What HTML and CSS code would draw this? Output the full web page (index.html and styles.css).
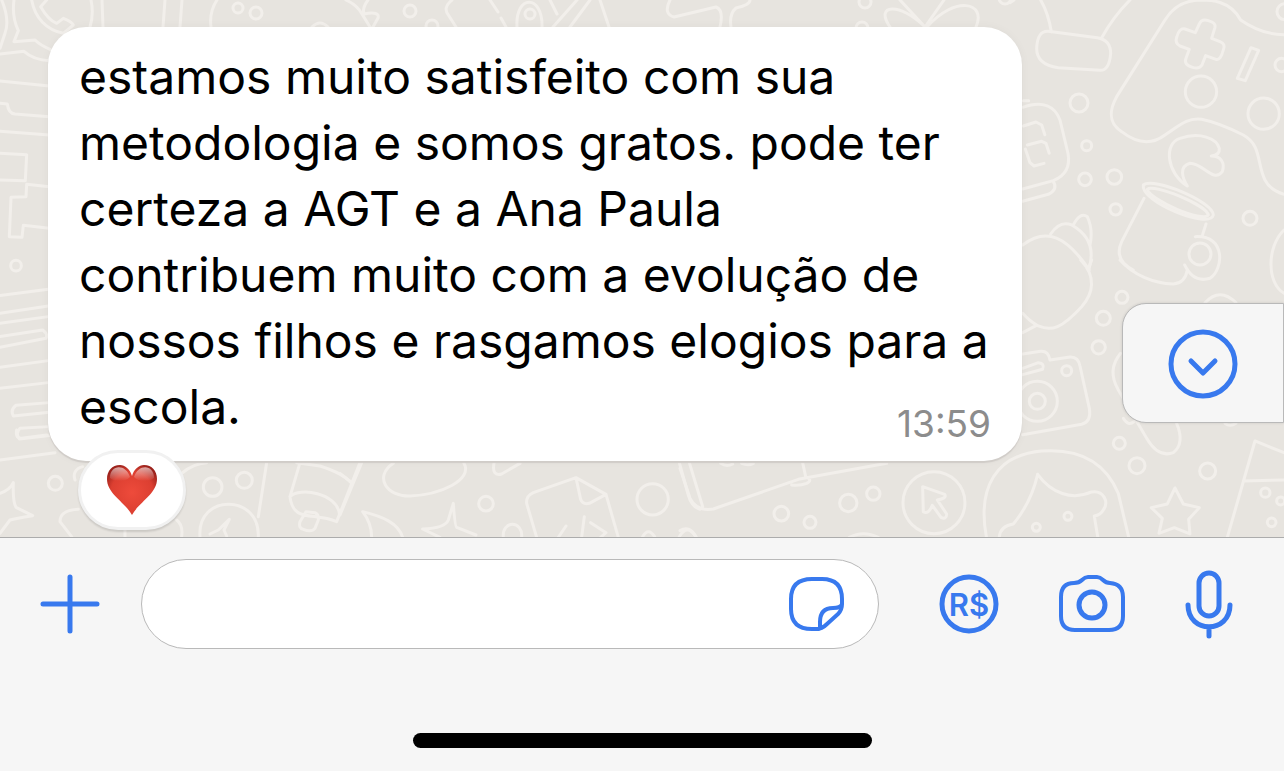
FILE: index.html
```html
<!DOCTYPE html>
<html lang="pt-BR">

<head>
  <meta charset="UTF-8" />
  <meta name="viewport" content="width=device-width, initial-scale=1" />
  <title>Conversa</title>

  <link rel="stylesheet" href="styles.css">
</head>

<body>
  <main class="chat">
    <svg class="wallpaper" viewBox="0 0 1284 537" preserveAspectRatio="xMinYMin slice" aria-hidden="true">
      <!-- right side, top: lamp, gamepad, clock, mug -->
      <g transform="translate(1010 0) scale(.3333)">
        <path d="M92 0Q115 40 124 95M360 0Q310 50 276 112M0 8L12 0" />
        <path d="M115 94L262 113Q302 120 302 160Q298 212 270 211L145 203Q80 195 80 145Q82 92 115 94Z" />
        <path d="M822 104Q755 104 692 60C660 0 600 0 570 0Q500 2 465 60L320 290C290 345 305 375 335 395C380 430 425 435 465 405C510 375 535 352 575 358Q625 368 700 405C755 435 740 490 765 540Q780 570 822 583" />
        <path d="M568 72Q575 55 595 62Q618 68 615 82L605 115L630 125Q648 132 640 150Q632 182 618 178L587 167L576 195Q568 208 548 202Q520 194 528 175L538 148L510 138Q494 130 500 112Q508 82 525 87L556 98Z" />
        <path d="M723 143L746 151L706 242L682 235Z" />
        <circle cx="573" cy="275" r="47" /><circle cx="761" cy="341" r="47" />
        <circle cx="825" cy="35" r="24" /><circle cx="815" cy="195" r="20" />
        <circle cx="207" cy="309" r="27" /><circle cx="230" cy="437" r="15" />
        <circle cx="225" cy="538" r="19" /><circle cx="313" cy="531" r="22" />
        <circle cx="317" cy="628" r="17" /><circle cx="720" cy="655" r="21" />
        <path d="M38 322C100 300 135 320 150 360L174 460Q185 520 130 542L38 567M38 604L115 583Q145 568 130 545M40 302L56 302" />
        <path stroke-dasharray="30 10" d="M40 378L78 366L95 375L107 412M52 435L95 424L108 430L121 470M46 447L60 488L72 498L118 486" />
        <path d="M532 558C470 520 460 430 510 415C570 395 620 415 628 445Q630 465 604 468C635 468 645 490 637 515C610 550 580 490 540 490C505 500 518 535 532 558Z" />
        <path d="M400 555C430 530 610 605 610 645C600 690 390 605 400 555Z" />
        <path d="M412 568C430 550 590 615 595 645C580 670 420 600 412 568Z" />
        <path d="M402 595L335 725Q310 780 370 810M588 672L576 710M556 710C650 705 640 810 600 835Q550 850 524 795" />
        <circle cx="570" cy="762" r="33" />
        <path d="M38 735C110 680 170 710 238 810M122 702Q150 660 185 675Q265 720 236 810M190 675Q210 635 232 650Q250 690 240 735M822 690C770 740 770 850 822 880" />
      </g>
      <!-- right side, bottom: fruit, camera, girl, star -->
      <g transform="translate(1010 260) scale(.3333)">
        <path d="M212 0C260 50 250 100 215 140C155 205 125 215 85 198Q60 185 38 160M38 218L78 197M245 0L235 28M330 0C370 45 430 70 490 72Q525 70 532 30M585 128Q630 80 678 128" />
        <path d="M38 282L92 274Q115 272 120 300L180 291Q205 290 210 318L238 445Q245 485 215 493L38 524M38 325L85 308Q105 310 98 328L38 344" />
        <circle cx="82" cy="424" r="60" /><circle cx="82" cy="424" r="24" />
        <circle cx="170" cy="332" r="15" /><circle cx="336" cy="112" r="18" />
        <circle cx="280" cy="175" r="21" /><circle cx="266" cy="262" r="20" />
        <circle cx="328" cy="550" r="18" /><circle cx="381" cy="617" r="24" />
        <circle cx="593" cy="633" r="24" />
        <path d="M332 280Q290 330 325 390L410 535Q445 595 490 578Q525 550 500 490M340 475Q355 500 372 485M645 490Q660 502 678 490" />
        <path d="M495 684L520 732L568 743L536 778L540 822L493 803L447 820L457 775L424 743L472 732Z" />
        <path d="M652 832L735 543L822 578M700 663L822 660" />
        <circle cx="766" cy="698" r="14" /><circle cx="812" cy="723" r="12" /><circle cx="785" cy="787" r="13" />
      </g>
      <g transform="translate(680 440) scale(.3333)">
        <path d="M920 295C890 140 950 45 1085 33C1235 22 1290 100 1315 160L1347 295M1073 103C1115 160 1175 182 1235 156C1270 150 1288 185 1270 210Q1262 225 1243 228L1254 295M1073 103C1060 160 1035 210 1000 252Q960 258 958 292" />
        <circle cx="1164" cy="229" r="12" /><circle cx="1069" cy="262" r="12" />
        <circle cx="762" cy="188" r="93" />
        <path d="M728 140L794 163Q802 175 772 180L800 222Q800 240 783 232L757 196Q745 225 730 215Z" />
        <circle cx="505" cy="189" r="26" /><circle cx="580" cy="161" r="20" />
        <circle cx="304" cy="221" r="22" /><circle cx="390" cy="247" r="18" />
        <path d="M0 85L30 175Q50 215 100 207L355 118L620 70M28 68L68 200M368 68L377 110Q400 120 380 130Q360 138 335 135M0 272Q30 255 48 292M508 292Q550 270 595 292M122 70Q140 82 158 72M185 70Q205 78 220 70" />
      </g>
      <!-- bottom middle: paper sheet, sparkle -->
      <g transform="translate(340 440) scale(.3333)">
        <path d="M590 292L560 190Q558 168 580 158L708 113L798 163L835 292M708 113L722 178Q728 195 748 190L798 163M655 292L678 258M725 292L733 230M752 248L798 278L782 292" />
        <circle cx="938" cy="178" r="47" /><circle cx="438" cy="191" r="22" />
        <path d="M1018 68L1045 165Q1055 200 1080 208M490 292C485 240 550 240 545 292M908 290Q925 260 944 290M1018 290Q1042 250 1068 290" />
        <path d="M160 70C100 110 140 170 210 168C300 165 400 120 372 70M462 70Q455 110 485 102L540 70M0 225L65 68M0 100L35 128M95 292Q95 250 68 215C130 230 175 250 188 292" />
        <path d="M300 292L248 267Q315 265 325 240L340 190Q345 260 350 262L408 285" />
      </g>
      <!-- bottom left: sparkle, clock, bulb -->
      <g transform="translate(0 430) scale(.3333)">
        <path d="M0 190Q30 180 40 158Q38 215 48 232L98 257Q45 265 30 270L0 310M50 0Q45 25 65 25L140 15M0 90L165 68M215 320L180 275Q180 240 235 238M545 320Q550 285 530 270M375 300V320M545 130Q580 100 620 98M800 98L775 260" />
        <circle cx="166" cy="160" r="21" /><circle cx="638" cy="171" r="28" /><circle cx="733" cy="151" r="24" />
        <path d="M248 110Q215 120 225 150M600 320C590 190 780 190 775 320M630 312L655 300L688 268L672 300L680 318" />
        <path d="M900 98L870 200C880 280 940 245 1010 275L1080 98M870 200C900 170 1010 190 1018 250M890 98L960 108Q1030 130 1055 160M918 245L945 248Q958 255 955 270L945 295Q935 308 910 298Q895 295 900 275Z" />
      </g>
      <!-- left edge: phone bubble, bus, shelves -->
      <g transform="scale(.3333)">
        <path d="M5 0Q30 60 15 100L0 145M42 0Q35 50 55 92L42 125L105 120Q120 135 150 148M0 162L72 154Q100 180 150 182M95 0C105 55 140 90 190 100L220 75Q215 65 190 55L170 70Q145 60 122 20L140 0" />
        <path d="M0 243L148 258M0 310L22 312Q25 340 45 342L148 350M0 394L148 405M0 460L80 464L76 542L0 540M80 553L148 560M80 553L78 590L33 592L28 710L66 712L70 676L148 685" />
        <circle cx="48" cy="797" r="16" />
        <path d="M0 887L145 868M0 940L145 918M0 970L145 950M0 1010L128 990Q145 1002 138 1015L0 1042M0 1102L145 1082M0 1165L145 1148M148 1208L48 1216Q30 1230 40 1248L148 1237M148 1280L60 1285Q45 1300 58 1317L148 1307" />
      </g>
      <!-- strip above the bubble -->
      <g>
        <path d="M91 0Q94 14 90 27M102 0L103 27M165 0L163 27M182 0L180 27M217 0Q209 12 211 27M312 27Q320 19 328 27M346 0Q357 5 362 14L370 27M368 0Q362 8 364 14Q380 11 378 18L373 27M452 0Q442 8 449 16L456 27M490 0L498 12M501 18L506 27M517 27C515 -6 543 -6 542 27M550 0L557 14M577 0L553 27M590 0L570 27M600 0L609 27M670 0Q663 14 674 17L716 7Q724 10 720 27M750 0Q750 5 736 8Q729 14 731 27M900 0L925 27L944 0M890 27C874 4 900 2 925 27M927 27C955 -5 987 2 976 27" />
        <circle cx="238" cy="8" r="5" /><circle cx="256" cy="13" r="6" />
        <circle cx="410" cy="11" r="6" /><circle cx="530" cy="14" r="5" /><circle cx="432" cy="26" r="6" />
        <circle cx="865" cy="2" r="6" /><circle cx="862" cy="28" r="6" /><circle cx="1005" cy="-2" r="6" />
      </g>
    </svg>

    <article class="message">
      <p class="message-text">estamos muito satisfeito com sua<br>
        metodologia e somos gratos. pode ter<br>
        certeza a AGT e a Ana Paula<br>
        contribuem muito com a evolução de<br>
        nossos filhos e rasgamos elogios para a<br>
        escola.</p>
      <time class="message-time">13:59</time>
      <button class="reaction" type="button" aria-label="Reação: coração">
        <svg width="50" height="50" viewBox="0 0 50 50">
          <defs>
            <radialGradient id="heart" cx=".5" cy=".55" r=".6">
              <stop offset="0" stop-color="#ee4b3b" />
              <stop offset=".7" stop-color="#dc3f31" />
              <stop offset="1" stop-color="#9c221c" />
            </radialGradient>
            <linearGradient id="shine" x1="0" y1="0" x2="0" y2="1">
              <stop offset="0" stop-color="#fff" stop-opacity=".6" />
              <stop offset="1" stop-color="#fff" stop-opacity="0" />
            </linearGradient>
          </defs>
          <path fill="url(#heart)" d="M25 11C23 4 18 0 13 0C5 0 0 6 0 14C0 29 18 37 25 50C32 37 50 29 50 14C50 6 45 0 37 0C32 0 27 4 25 11Z" />
          <path fill="url(#shine)" d="M3 13C3 -1 19 -1 23 12C19 17 7 17 3 13ZM27 12C31 -1 47 -1 47 13C43 17 31 17 27 12Z" />
        </svg>
      </button>
    </article>

    <button class="scroll-down" type="button" aria-label="Ir para o fim">
      <svg class="icon" width="70" height="72" viewBox="0 0 70 72">
        <circle cx="35" cy="37" r="32" />
        <path d="M23 34L35 46L47 34" />
      </svg>
    </button>
  </main>

  <footer class="composer">
    <form class="composer-row">
      <button type="button" aria-label="Anexar">
        <svg class="icon" width="60" height="60" viewBox="0 0 60 60">
          <path d="M30 3V57M3 30H57" />
        </svg>
      </button>
      <div class="field">
        <input type="text" aria-label="Mensagem">
        <button type="button" aria-label="Figurinhas">
          <svg class="icon thin" width="56" height="56" viewBox="0 0 56 56">
            <path d="M31 53H24Q3 53 3 33V23Q3 3 24 3H34Q54 3 54 23V28Q54 34 50 38L39 48Q34 53 28 53M32 52V46Q32 32 45 32Q53 32 54 28" />
          </svg>
        </button>
      </div>
      <button type="button" aria-label="Pagamento">
        <svg class="icon" width="60" height="60" viewBox="0 0 60 60">
          <circle cx="30" cy="30" r="27" />
          <text x="30" y="42" text-anchor="middle">R$</text>
        </svg>
      </button>
      <button type="button" aria-label="Câmera">
        <svg class="icon" width="66" height="60" viewBox="0 0 66 60">
          <path class="thin" d="M15 9Q20 9 23 6Q26 3 29 3H38Q41 3 44 6Q47 9 51 9Q64 10 64 23V42Q64 56 50 56H16Q2 56 2 42V23Q2 9 15 9Z" />
          <circle cx="33" cy="31" r="13" />
        </svg>
      </button>
      <button type="button" aria-label="Gravar áudio">
        <svg class="icon" width="48" height="70" viewBox="0 0 48 70">
          <rect x="14" y="4" width="20" height="43" rx="10" />
          <path d="M3 36C3 65 45 65 45 36M24 58V67" />
        </svg>
      </button>
    </form>
    <div class="home-indicator"></div>
  </footer>
</body>

</html>
```

FILE: styles.css
```css
* {
  box-sizing: border-box;
}

body {
  margin: 0;
  min-height: 100vh;
  display: flex;
  flex-direction: column;
  font-family: Inter, "Liberation Sans", sans-serif;
  background-color: #f6f6f6;
}

button {
  display: flex;
  flex: none;
  padding: 0;
  border: 0;
  background: none;
  font-family: inherit;
  cursor: pointer;
}

.chat {
  position: relative;
  flex: 1;
  overflow: hidden;
  padding: 27px 262px 76px 48px;
  background-color: #e7e4df;
}

.wallpaper {
  position: absolute;
  top: 0;
  left: 0;
  width: 100%;
  height: 100%;
  fill: none;
  stroke: #f2efeb;
  stroke-linecap: round;
  stroke-linejoin: round;
}

.wallpaper * {
  stroke-width: 3px;
  vector-effect: non-scaling-stroke;
}

.message {
  position: relative;
  padding: 17px 31px 21px;
  border-radius: 38px;
  background-color: #fff;
  box-shadow: 0 2px 1px #d0ccc8, 0 0 10px rgba(0, 0, 0, 0.04);
}

.message-text {
  margin: 0;
  font-size: 48px;
  line-height: 66px;
  color: #000;
  white-space: nowrap;
}

.message-time {
  position: absolute;
  right: 31px;
  bottom: 15px;
  font-size: 37px;
  line-height: 44px;
  color: #8c8c8c;
}

.reaction {
  position: absolute;
  left: 30px;
  bottom: -69px;
  width: 108px;
  height: 80px;
  align-items: center;
  justify-content: center;
  border: 3px solid #f1f1f1;
  border-radius: 40px;
  background-color: #fff;
  box-shadow: 0 2px 2px rgba(0, 0, 0, 0.12);
}

.scroll-down {
  position: absolute;
  right: 0;
  bottom: 114px;
  width: 162px;
  height: 120px;
  align-items: center;
  justify-content: center;
  border: 1px solid #b9b9b9;
  border-radius: 24px 0 0 24px;
  background-color: #f6f6f6;
  box-shadow: 0 0 3px rgba(0, 0, 0, 0.12);
}

.icon {
  fill: none;
  stroke: #3879ee;
  stroke-width: 5px;
  stroke-linecap: round;
  stroke-linejoin: round;
}

.thin {
  stroke-width: 4px;
}

.icon text {
  fill: #3879ee;
  stroke: none;
  font-size: 31px;
  font-weight: 600;
}

.composer {
  border-top: 1px solid #acacac;
  padding: 21px 0 23px;
}

.composer-row {
  display: flex;
  align-items: center;
  gap: 60px;
  padding: 0 51px 0 40px;
}

.field {
  flex: 1;
  min-width: 0;
  height: 90px;
  margin-left: -19px;
  display: flex;
  align-items: center;
  padding: 0 34px;
  border: 1px solid #b9b9b9;
  border-radius: 45px;
  background-color: #fff;
}

.field input {
  flex: 1;
  min-width: 0;
  border: 0;
  outline: 0;
  background: none;
  font-family: inherit;
  font-size: 48px;
}

.home-indicator {
  width: 459px;
  max-width: 60%;
  height: 15px;
  margin: 84px auto 0;
  border-radius: 8px;
  background-color: #000;
}
```
